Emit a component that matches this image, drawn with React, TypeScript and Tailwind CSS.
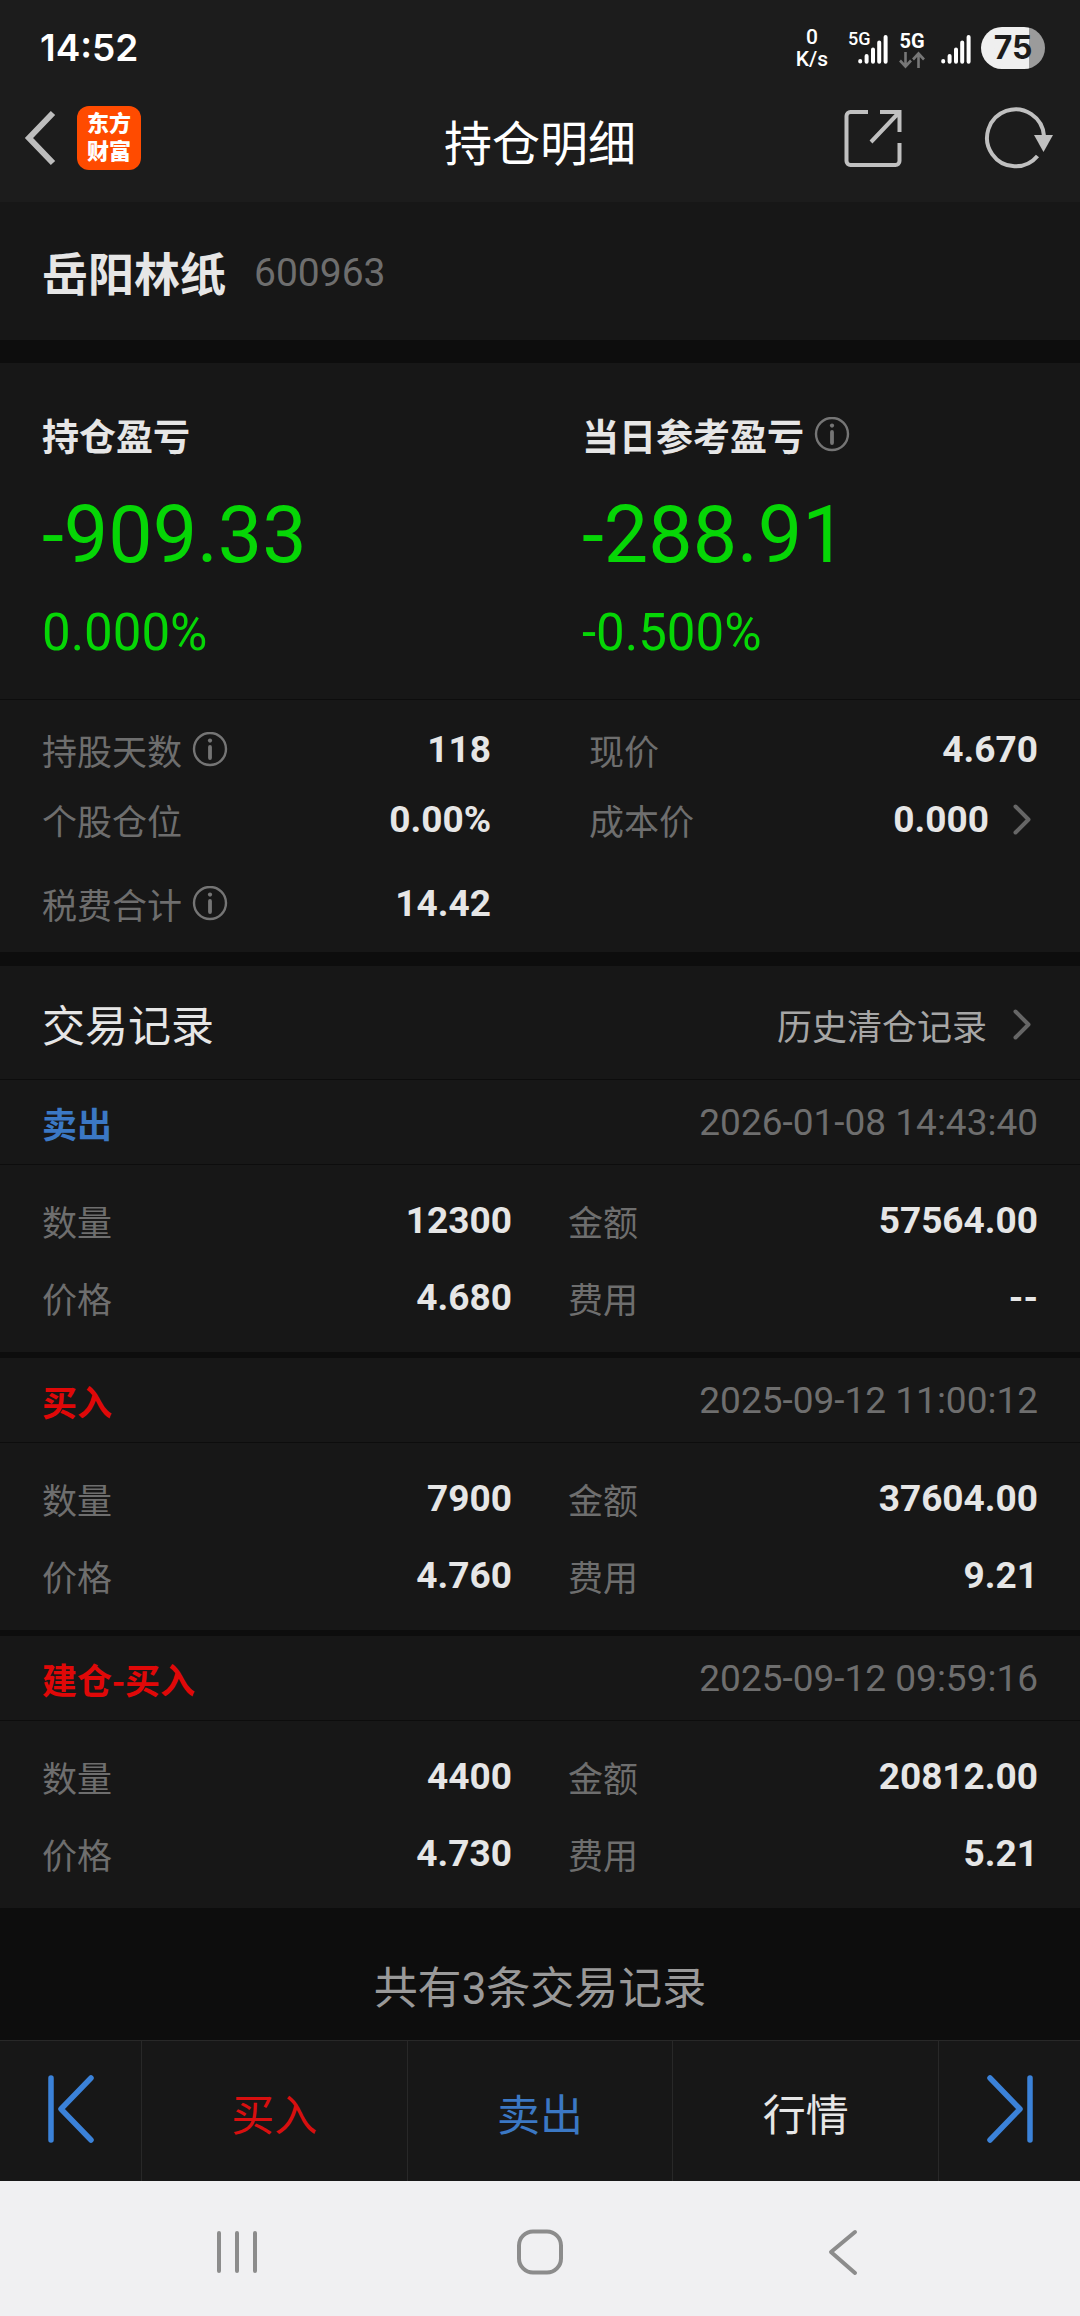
import type { ReactNode } from "react";

const CJK = "font-['Noto_Sans_CJK_SC',sans-serif]";

type TradeRecord = {
    type: string;
    side: "buy" | "sell";
    time: string;
    quantity: string;
    amount: string;
    price: string;
    fee: string;
};

const records: TradeRecord[] = [
    { type: "卖出", side: "sell", time: "2026-01-08 14:43:40", quantity: "12300", amount: "57564.00", price: "4.680", fee: "--" },
    { type: "买入", side: "buy", time: "2025-09-12 11:00:12", quantity: "7900", amount: "37604.00", price: "4.760", fee: "9.21" },
    { type: "建仓-买入", side: "buy", time: "2025-09-12 09:59:16", quantity: "4400", amount: "20812.00", price: "4.730", fee: "5.21" },
];

function SignalBars() {
    return (
        <svg width="30" height="30" viewBox="0 0 30 30" stroke="#fff" strokeWidth="4" strokeLinecap="round">
            <path d="M2.2 26v0.6M8.6 21v5.8M15 14.5v12.3M21.2 7.5v19.3M27.6 2v24.8" />
        </svg>
    );
}

function InfoIcon() {
    return (
        <svg width="36" height="36" viewBox="0 0 36 36" fill="none" stroke="#757575">
            <circle cx="18" cy="17" r="16" strokeWidth="2.4" />
            <circle cx="18" cy="8.6" r="2.1" fill="#757575" stroke="none" />
            <path d="M18 15v11" strokeWidth="3.8" strokeLinecap="round" />
        </svg>
    );
}

function ChevronRight() {
    return (
        <svg width="18" height="32" viewBox="0 0 18 32" fill="none" stroke="#666" strokeWidth="4" strokeLinecap="round" strokeLinejoin="round">
            <path d="M2.500 2.500L15.500 15.500L2.500 28.500" />
        </svg>
    );
}

function StatusBar() {
    return (
        <div className="flex h-24 items-center justify-between pl-10 pr-[35px]">
            <span className="font-['Inter',sans-serif] text-[37px] leading-[44px] font-semibold text-white">14:52</span>
            <div className="flex items-center font-medium text-white">
                <p className="mr-5 text-center text-[21px] leading-[22px]">
                    0
                    <br />
                    K/s
                </p>
                <div className="relative mr-[11px] flex w-10 justify-end pt-1">
                    <span className="absolute top-0 left-0 text-[18px] leading-4">5G</span>
                    <SignalBars />
                </div>
                <div className="mr-4 flex flex-col items-center pt-1">
                    <span className="text-[20px] leading-5 font-bold">5G</span>
                    <svg width="26" height="18" viewBox="0 0 26 18" fill="none" stroke="#777" strokeWidth="2.6">
                        <path d="M6.500 1v14M1 9.500l5.500 6l5.500-6" />
                        <path d="M19.500 17V3M14 8.500l5.500-6l5.500 6" />
                    </svg>
                </div>
                <div className="pt-1">
                    <SignalBars />
                </div>
                <span className="ml-[10px] flex h-[42px] w-16 items-center justify-center rounded-full bg-linear-to-r from-[#efefef] from-75% to-[#9b9b9b] to-75% font-['Inter',sans-serif] text-[32px] leading-10 font-bold text-[#1c1c1c]">
                    75
                </span>
            </div>
        </div>
    );
}

function Header() {
    return (
        <header className="grid h-[106px] grid-cols-[1fr_auto_1fr] items-start">
            <div className="flex items-start gap-5 pt-[10px] pl-[23px]">
                <button aria-label="返回" className="flex h-16 items-center">
                    <svg width="34" height="56" viewBox="0 0 34 56" fill="none" stroke="#bdbdbd" strokeWidth="6">
                        <path d="M30 3L6 28L30 53" />
                    </svg>
                </button>
                <div className="flex h-16 w-16 items-center justify-center rounded-xl bg-[#ff4b00] text-center text-[22px] leading-7 font-black text-white">
                    东方
                    <br />
                    财富
                </div>
            </div>
            <h1 className={`${CJK} pt-[10px] text-5xl leading-[68px] text-white`}>持仓明细</h1>
            <div className="flex items-start justify-end gap-[82px] pt-3 pr-[26px]">
                <button aria-label="分享" className="flex h-[60px] items-center">
                    <svg width="58" height="60" viewBox="0 0 58 60" fill="none" stroke="#c0c0c0" strokeWidth="4">
                        <path d="M24 4H6.500a4 4 0 0 0-4 4V53a4 4 0 0 0 4 4H51.500a4 4 0 0 0 4-4V35" />
                        <path d="M36 4H55.500V24M55 4.500L27 34" />
                    </svg>
                </button>
                <button aria-label="刷新" className="flex h-[60px] items-center">
                    <svg width="70" height="64" viewBox="0 0 70 64" fill="none" stroke="#c0c0c0" strokeWidth="4">
                        <path d="M53.500 50A28.500 28.500 0 1 1 60 30" />
                        <path d="M50 29H69L59.500 46z" fill="#c0c0c0" stroke="none" />
                    </svg>
                </button>
            </div>
        </header>
    );
}

function ProfitBlock({ title, value, percent, info }: { title: string; value: string; percent: string; info?: boolean }) {
    return (
        <div className="px-[42px] text-[#06d606]">
            <h3 className={`${CJK} flex h-12 items-center gap-[10px] text-[37px] leading-12 font-bold text-[#e6e6e6]`}>
                {title}
                {info && <InfoIcon />}
            </h3>
            <p className="mt-[30px] text-[79px] leading-[92px]">{value}</p>
            <p className="mt-[22px] text-[51px] leading-[60px]">{percent}</p>
        </div>
    );
}

function DataItem({ label, value, info, arrow }: { label: string; value: string; info?: boolean; arrow?: boolean }) {
    return (
        <div className="flex h-full items-center justify-between">
            <dt className={`${CJK} flex items-center gap-[10px] text-[35px] leading-12 text-[#6e6e6e]`}>
                {label}
                {info && <InfoIcon />}
            </dt>
            <dd className="flex items-center gap-6 text-[37px] leading-12 font-bold text-[#e6e6e6]">
                {value}
                {arrow && (
                    <button aria-label="查看成本价" className="pr-[7px]">
                        <ChevronRight />
                    </button>
                )}
            </dd>
        </div>
    );
}

function RecordCard({ record }: { record: TradeRecord }) {
    return (
        <article className="bg-[#171717]">
            <div className="flex h-[85px] items-center justify-between border-b border-[#0d0d0d] px-[42px] pt-px">
                <h3 className={`${CJK} text-[35px] leading-12 font-bold ${record.side === "sell" ? "text-[#3b78c4]" : "text-[#e00808]"}`}>
                    {record.type}
                </h3>
                <time className="text-[37px] leading-12 text-[#6e6e6e]">{record.time}</time>
            </div>
            <dl className="grid auto-rows-[77px] grid-cols-2 gap-x-[56px] px-[42px] pt-[17px] pb-4">
                <DataItem label="数量" value={record.quantity} />
                <DataItem label="金额" value={record.amount} />
                <DataItem label="价格" value={record.price} />
                <DataItem label="费用" value={record.fee} />
            </dl>
        </article>
    );
}

function ActionButton({ children, className }: { children: ReactNode; className: string }) {
    return (
        <button className={`${CJK} flex-1 border-r border-[#282828] pt-[2px] text-[43px] leading-[60px] ${className}`}>
            {children}
        </button>
    );
}

export default function App() {
    return (
        <div className="flex min-h-screen flex-col bg-[#0d0d0d] font-['Roboto','Noto_Sans_CJK_SC',sans-serif]">
            <div className="bg-[#1c1c1c]">
                <StatusBar />
                <Header />
            </div>

            <main className="flex flex-1 flex-col">
                {/* 股票名称 */}
                <section className="flex h-[138px] items-center gap-7 bg-[#171717] px-[42px]">
                    <h2 className={`${CJK} text-[46px] leading-[68px] font-bold text-[#e6e6e6]`}>岳阳林纸</h2>
                    <span className="pt-1 text-[39px] leading-[68px] text-[#6e6e6e]">600963</span>
                </section>

                {/* 盈亏 */}
                <section className="mt-[23px] bg-[#171717]">
                    <div className="grid grid-cols-2 border-b border-[#0d0d0d] pt-12 pb-9">
                        <ProfitBlock title="持仓盈亏" value="-909.33" percent="0.000%" />
                        <ProfitBlock title="当日参考盈亏" value="-288.91" percent="-0.500%" info />
                    </div>
                    <dl className="grid grid-cols-2 grid-rows-[70px_70px_97px] gap-x-[98px] px-[42px] pt-[15px]">
                        <DataItem label="持股天数" value="118" info />
                        <DataItem label="现价" value="4.670" />
                        <DataItem label="个股仓位" value="0.00%" />
                        <DataItem label="成本价" value="0.000" arrow />
                        <DataItem label="税费合计" value="14.42" info />
                    </dl>
                </section>

                {/* 交易记录 */}
                <section className="mt-[14px]">
                    <div className="flex h-[114px] items-center justify-between border-b border-[#0d0d0d] bg-[#171717] px-[42px]">
                        <h2 className={`${CJK} text-[43px] leading-[60px] text-[#e6e6e6]`}>交易记录</h2>
                        <a href="#history" className={`${CJK} flex items-center gap-[26px] pt-1 pr-[7px] text-[35px] leading-12 text-[#a6a6a6]`}>
                            历史清仓记录
                            <ChevronRight />
                        </a>
                    </div>
                    <div className="flex flex-col gap-[6px]">
                        {records.map((record) => (
                            <RecordCard key={record.time} record={record} />
                        ))}
                    </div>
                </section>

                <div className="flex min-h-[132px] flex-1 items-center justify-center pt-[30px] text-[44px] leading-[60px] text-[#999]">
                    共有{records.length}条交易记录
                </div>
            </main>

            {/* 底部操作栏 */}
            <div className="flex h-[141px] border-t border-[#282828] bg-[#171717]">
                <button aria-label="上一只" className="flex w-[142px] items-center justify-center border-r border-[#282828] pb-1">
                    <svg width="48" height="68" viewBox="0 0 48 68" fill="none" stroke="#3b82d9" strokeWidth="5.500" strokeLinecap="round" strokeLinejoin="round">
                        <path d="M4 3V65M44 3L14 34L44 65" />
                    </svg>
                </button>
                <ActionButton className="text-[#d80f0f]">买入</ActionButton>
                <ActionButton className="text-[#3b78c4]">卖出</ActionButton>
                <ActionButton className="text-[#e6e6e6]">行情</ActionButton>
                <button aria-label="下一只" className="flex w-[141px] items-center justify-center pb-1">
                    <svg width="48" height="68" viewBox="0 0 48 68" fill="none" stroke="#3b82d9" strokeWidth="5.500" strokeLinecap="round" strokeLinejoin="round">
                        <path d="M44 3V65M4 3L34 34L4 65" />
                    </svg>
                </button>
            </div>

            {/* 系统导航 */}
            <nav className="flex h-[135px] items-center bg-[#f0f0f2] px-[86px] pt-[7px]">
                <button aria-label="最近任务" className="flex flex-1 justify-center">
                    <svg width="42" height="48" viewBox="0 0 42 48" stroke="#8c8c8c" strokeWidth="4" strokeLinecap="round">
                        <path d="M3 5V43M21 5V43M39 5V43" />
                    </svg>
                </button>
                <button aria-label="主页" className="flex flex-1 justify-center">
                    <svg width="48" height="48" viewBox="0 0 48 48" fill="none" stroke="#8c8c8c" strokeWidth="4">
                        <rect x="3" y="3.500" width="42" height="41" rx="14" />
                    </svg>
                </button>
                <button aria-label="返回上一级" className="flex flex-1 justify-center">
                    <svg width="30" height="48" viewBox="0 0 30 48" fill="none" stroke="#8c8c8c" strokeWidth="4" strokeLinecap="round" strokeLinejoin="round">
                        <path d="M27 4L3 24L27 45" />
                    </svg>
                </button>
            </nav>
        </div>
    );
}
